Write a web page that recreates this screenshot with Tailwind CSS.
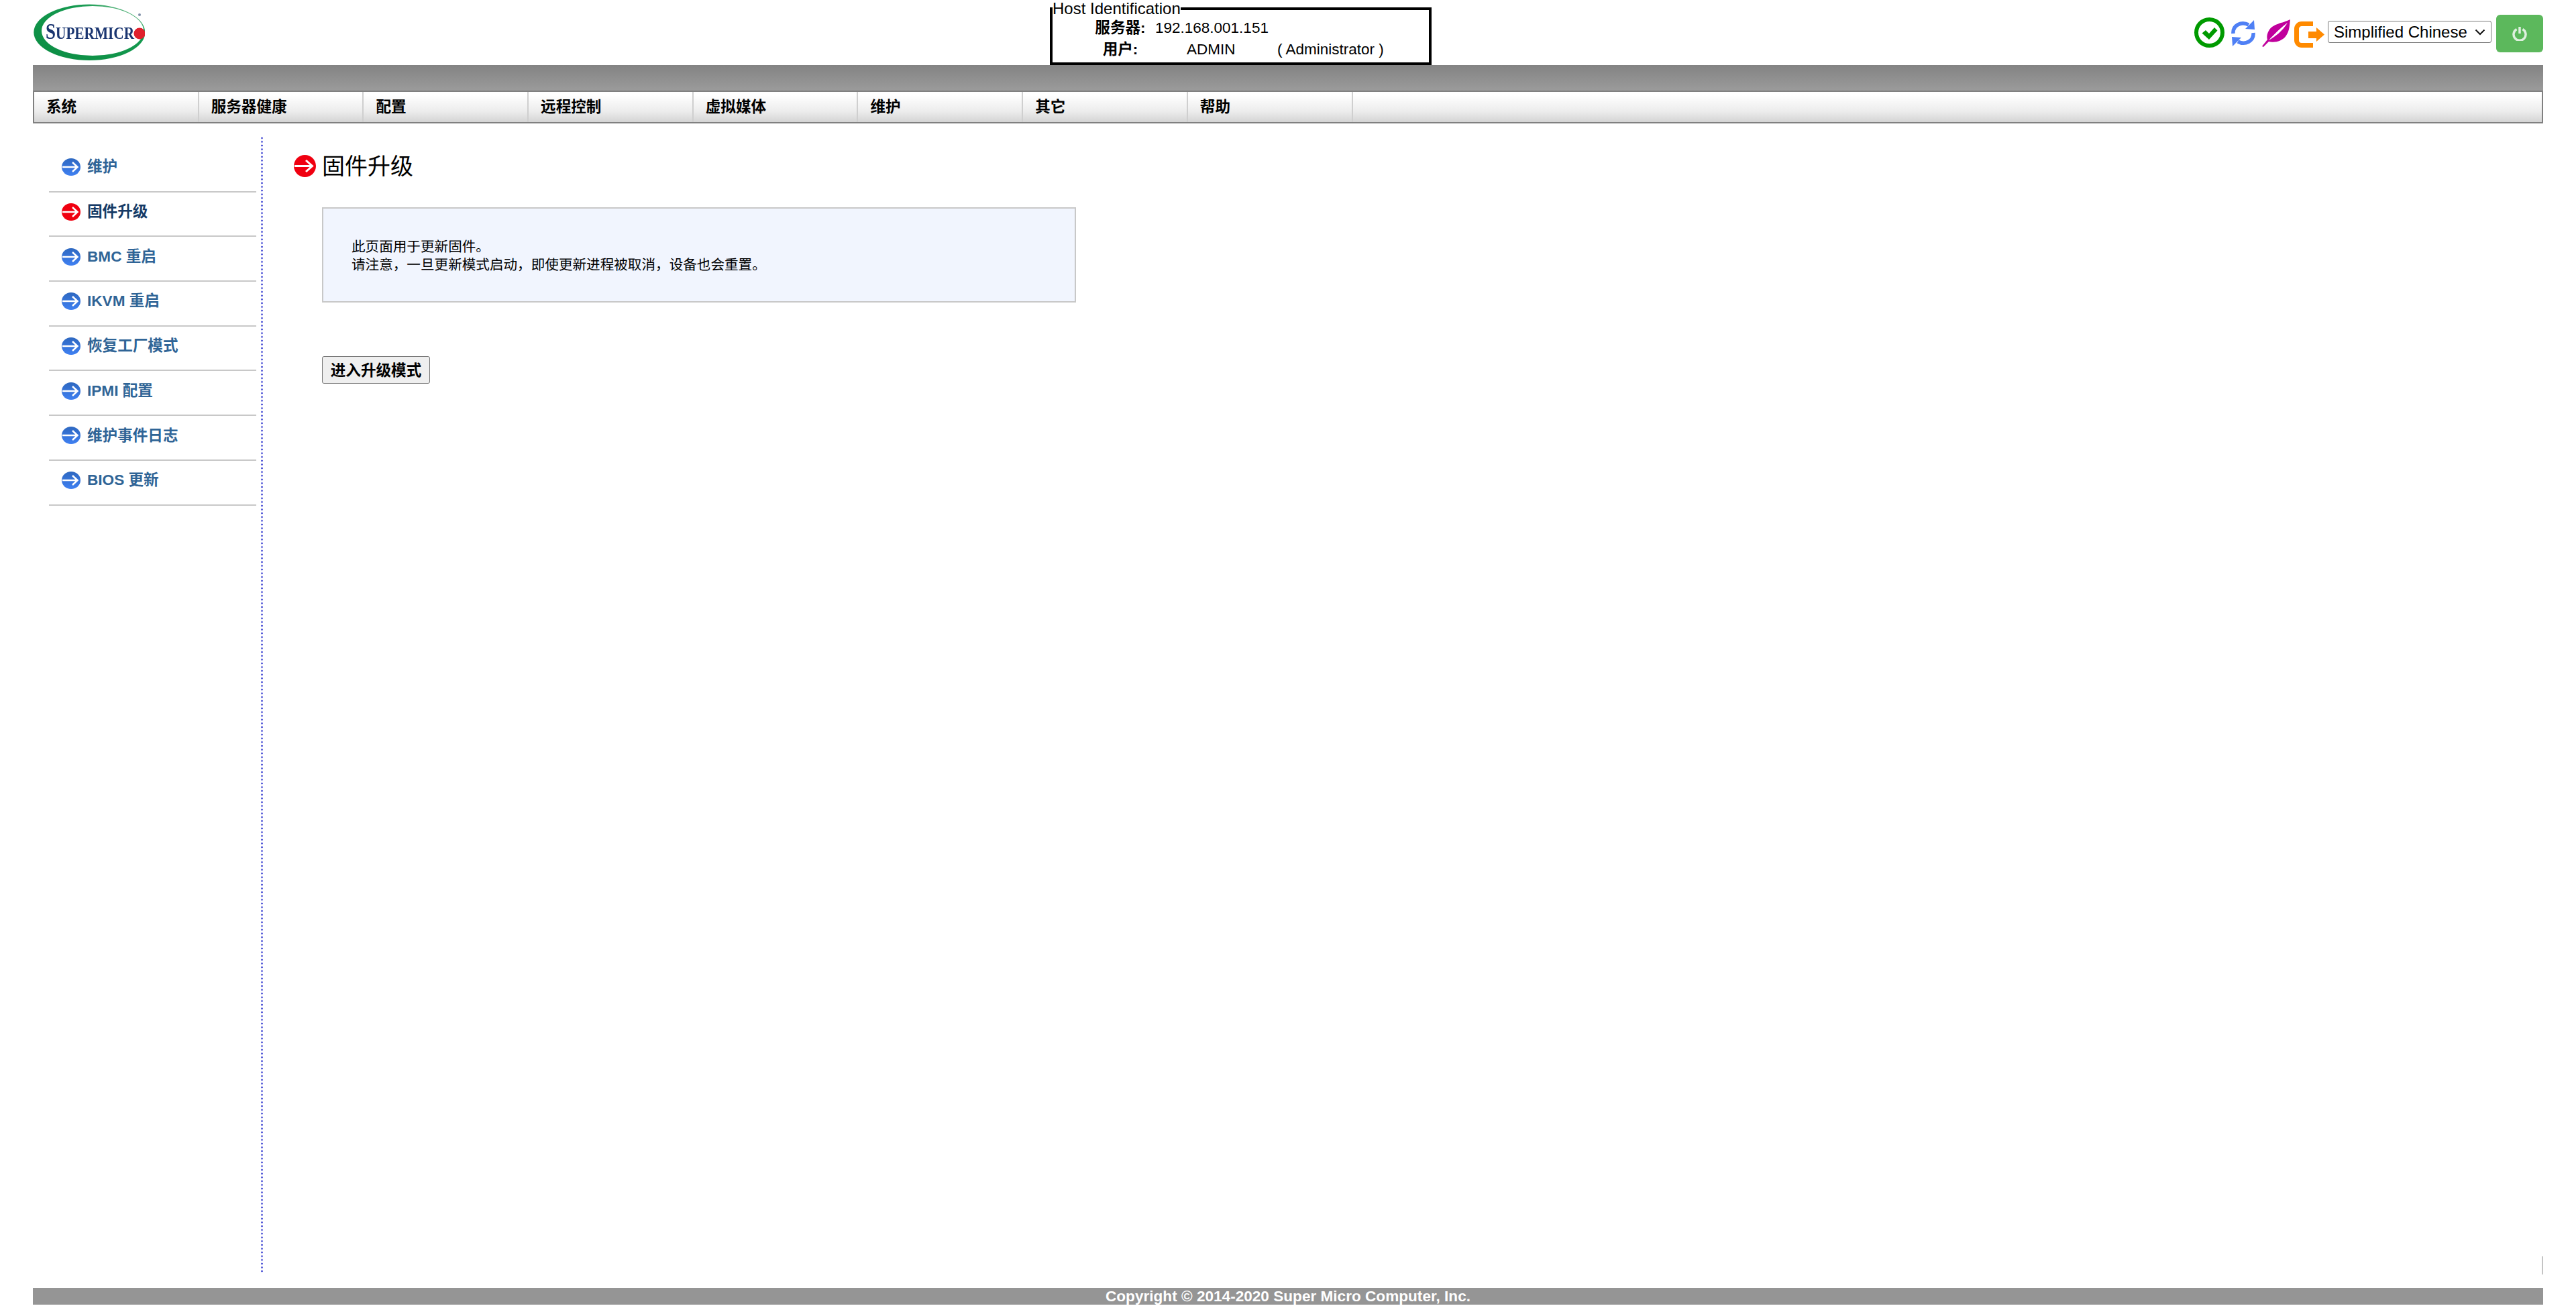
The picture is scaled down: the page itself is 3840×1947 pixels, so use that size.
<!doctype html>
<html lang="zh-CN">
<head>
<meta charset="utf-8">
<title>固件升级</title>
<script src="https://cdn.jsdelivr.net/npm/@tailwindcss/browser@4"></script>
</head>
<body class="bg-white h-[1947px] overflow-hidden text-black text-[22.600px] [font-family:'Liberation_Sans','Noto_Sans_CJK_SC',sans-serif]">
<svg class="absolute w-0 h-0">
  <defs>
    <linearGradient id="b" x1="0" y1="0" x2="0" y2="1"><stop offset="0" stop-color="#2e68c0"/><stop offset="1" stop-color="#3f80f2"/></linearGradient>
    <linearGradient id="g" x1="0" y1="1" x2="1" y2="0"><stop offset="0" stop-color="#0b8c42"/><stop offset="0.7" stop-color="#159a50"/><stop offset="1" stop-color="#8cc8a0"/></linearGradient>
  </defs>
</svg>
<div class="px-[49px]">
  <header class="flex h-[97px] items-start">
    <div class="w-[1516px] pt-[6px]">
      <svg width="167" height="84" viewBox="0 0 167 84" class="block blur-[0.5px]">
        <path fill="url(#g)" fill-rule="evenodd" d="M1.300 42.300a83 41.700 0 1 0 166 0a83 41.700 0 1 0-166 0ZM13 40a76 37 0 1 0 152 0a76 37 0 1 0-152 0Z"/>
        <text x="19" y="52" fill="#1a3570" font-family="Liberation Serif" font-weight="700" textLength="132" lengthAdjust="spacingAndGlyphs"><tspan font-size="33">S</tspan><tspan font-size="26">UPERMICR</tspan></text>
        <circle cx="159" cy="44" r="8.500" fill="#e0202c"/>
        <circle cx="159" cy="16" r="2" fill="#8090a8"/>
      </svg>
    </div>
    <fieldset class="w-[569px] h-[97px] border-4 border-black">
      <legend class="h-[26px] leading-[26px] whitespace-nowrap text-[24px]">Host Identification</legend>
      <div class="flex h-[32px] items-center">
        <b class="ml-[60px] w-[82px] text-center whitespace-nowrap">服务器:</b>
        <span class="ml-[11px] text-[22.500px]">192.168.001.151</span>
      </div>
      <div class="flex h-[32px] items-center">
        <b class="ml-[60px] w-[82px] text-center whitespace-nowrap">用户:</b>
        <span class="ml-[58px] w-[135px] text-[22.500px]">ADMIN</span>
        <span class="text-[22.500px]">( Administrator )</span>
      </div>
    </fieldset>
    <div class="ml-auto flex items-start pt-[22px]">
      <svg width="45" height="45" viewBox="0 0 45 45" class="mt-[4px]">
        <ellipse cx="22.500" cy="22.500" rx="19.500" ry="19.500" fill="none" stroke="#009a00" stroke-width="6"/>
        <path d="M11.500 23.500 17 19l5 5 8-9 4.500 4.500L22 33Z" fill="#009a00"/>
      </svg>
      <svg width="38" height="39" viewBox="0 0 38 39" class="ml-[9px] mt-[8px]">
        <path d="M4 20C3 8 16 1 27 7M34 19c1 12-12 19-23 13" fill="none" stroke="#4f80f5" stroke-width="5.500"/>
        <path d="M35 0 36 14 22 13ZM2 25 16 26 3 39Z" fill="#4f80f5"/>
      </svg>
      <svg width="42" height="42" viewBox="0 0 42 42" class="ml-[9px] mt-[7px]">
        <path d="M42 0C30 6 16 6 10 17 7 22 7 27 8 30L0 40l2 1 8-8c8 2 20 0 26-9C41 17 41 8 42 0Z" fill="#c0009c"/>
        <path d="M38 5C28 12 18 22 10 31 20 25 30 18 38 5Z" fill="#fff"/>
      </svg>
      <svg width="46" height="39" viewBox="0 0 46 39" class="ml-[6px] mt-[10px]">
        <path d="M28 3.500H11a7.500 7.500 0 0 0-7.500 7.500v17a7.500 7.500 0 0 0 7.500 7.500h17" fill="none" stroke="#ff8a00" stroke-width="7"/>
        <path d="M21 15H33V9L45 19.500 33 30V25H21Z" fill="#ff8a00"/>
      </svg>
      <div class="relative ml-[4px] mt-[9px] w-[244px] h-[33px]">
        <select class="appearance-none w-full h-full pl-[8px] bg-white border border-[#767676] rounded-[3px] text-[24px] leading-none">
          <option>Simplified Chinese</option>
        </select>
        <svg width="16" height="10" viewBox="0 0 16 10" class="absolute right-[9px] top-[12px] pointer-events-none"><path d="M1.500 1.500 8 8l6.500-6.500" fill="none" stroke="#111" stroke-width="2"/></svg>
      </div>
      <button class="ml-[7px] w-[70px] h-[56px] bg-[#5cb85c] rounded-[6px] flex items-center justify-center">
        <svg width="22" height="22" viewBox="0 0 22 22">
          <path d="M6.500 4.500a9 9 0 1 0 9 0" fill="none" stroke="#dff0df" stroke-width="3.500"/>
          <path d="M11 1v10" stroke="#dff0df" stroke-width="3.500"/>
        </svg>
      </button>
    </div>
  </header>

  <div class="h-[38px] bg-gradient-to-b from-[#838383] to-[#9b9b9b]"></div>
  <nav class="flex h-[49px] border-x-2 border-y-2 border-[#808080] bg-gradient-to-b from-white from-10% via-[#ececec] via-65% to-[#d4d4d4] font-bold">
    <a class="w-[245.700px] shrink-0 pl-[18px] flex items-center border-r-2 border-[#cfcfcf]">系统</a>
    <a class="w-[245.700px] shrink-0 pl-[18px] flex items-center border-r-2 border-[#cfcfcf]">服务器健康</a>
    <a class="w-[245.700px] shrink-0 pl-[18px] flex items-center border-r-2 border-[#cfcfcf]">配置</a>
    <a class="w-[245.700px] shrink-0 pl-[18px] flex items-center border-r-2 border-[#cfcfcf]">远程控制</a>
    <a class="w-[245.700px] shrink-0 pl-[18px] flex items-center border-r-2 border-[#cfcfcf]">虚拟媒体</a>
    <a class="w-[245.700px] shrink-0 pl-[18px] flex items-center border-r-2 border-[#cfcfcf]">维护</a>
    <a class="w-[245.700px] shrink-0 pl-[18px] flex items-center border-r-2 border-[#cfcfcf]">其它</a>
    <a class="w-[245.700px] shrink-0 pl-[18px] flex items-center border-r-2 border-[#cfcfcf]">帮助</a>
  </nav>

  <div class="relative flex h-[1695px] mt-[19px]">
    <aside class="w-[333px] shrink-0 pl-[24px] pt-[17px] font-bold text-[#2f6496]">
      <a class="flex items-center h-[66.700px] pb-[6px] pl-[19px] gap-[10px] border-b-2 border-[#c8c8c8]"><svg width="28" height="26" viewBox="0 0 28 26" class="blur-[0.4px]"><ellipse cx="14" cy="13" rx="14" ry="13" fill="url(#b)"/><path d="M1 13H23M16 6l7.500 7-7.500 7" fill="none" stroke="#fff" stroke-width="2.500"/></svg>维护</a>
      <a class="flex items-center h-[66.700px] pb-[6px] pl-[19px] gap-[10px] border-b-2 border-[#c8c8c8] text-[#153a66]"><svg width="28" height="26" viewBox="0 0 28 26" class="blur-[0.4px]"><ellipse cx="14" cy="13" rx="14" ry="13" fill="#f00010"/><path d="M1 13H23M16 6l7.500 7-7.500 7" fill="none" stroke="#fff" stroke-width="2.500"/></svg>固件升级</a>
      <a class="flex items-center h-[66.700px] pb-[6px] pl-[19px] gap-[10px] border-b-2 border-[#c8c8c8]"><svg width="28" height="26" viewBox="0 0 28 26" class="blur-[0.4px]"><ellipse cx="14" cy="13" rx="14" ry="13" fill="url(#b)"/><path d="M1 13H23M16 6l7.500 7-7.500 7" fill="none" stroke="#fff" stroke-width="2.500"/></svg>BMC 重启</a>
      <a class="flex items-center h-[66.700px] pb-[6px] pl-[19px] gap-[10px] border-b-2 border-[#c8c8c8]"><svg width="28" height="26" viewBox="0 0 28 26" class="blur-[0.4px]"><ellipse cx="14" cy="13" rx="14" ry="13" fill="url(#b)"/><path d="M1 13H23M16 6l7.500 7-7.500 7" fill="none" stroke="#fff" stroke-width="2.500"/></svg>IKVM 重启</a>
      <a class="flex items-center h-[66.700px] pb-[6px] pl-[19px] gap-[10px] border-b-2 border-[#c8c8c8]"><svg width="28" height="26" viewBox="0 0 28 26" class="blur-[0.4px]"><ellipse cx="14" cy="13" rx="14" ry="13" fill="url(#b)"/><path d="M1 13H23M16 6l7.500 7-7.500 7" fill="none" stroke="#fff" stroke-width="2.500"/></svg>恢复工厂模式</a>
      <a class="flex items-center h-[66.700px] pb-[6px] pl-[19px] gap-[10px] border-b-2 border-[#c8c8c8]"><svg width="28" height="26" viewBox="0 0 28 26" class="blur-[0.4px]"><ellipse cx="14" cy="13" rx="14" ry="13" fill="url(#b)"/><path d="M1 13H23M16 6l7.500 7-7.500 7" fill="none" stroke="#fff" stroke-width="2.500"/></svg>IPMI 配置</a>
      <a class="flex items-center h-[66.700px] pb-[6px] pl-[19px] gap-[10px] border-b-2 border-[#c8c8c8]"><svg width="28" height="26" viewBox="0 0 28 26" class="blur-[0.4px]"><ellipse cx="14" cy="13" rx="14" ry="13" fill="url(#b)"/><path d="M1 13H23M16 6l7.500 7-7.500 7" fill="none" stroke="#fff" stroke-width="2.500"/></svg>维护事件日志</a>
      <a class="flex items-center h-[66.700px] pb-[6px] pl-[19px] gap-[10px] border-b-2 border-[#c8c8c8]"><svg width="28" height="26" viewBox="0 0 28 26" class="blur-[0.4px]"><ellipse cx="14" cy="13" rx="14" ry="13" fill="url(#b)"/><path d="M1 13H23M16 6l7.500 7-7.500 7" fill="none" stroke="#fff" stroke-width="2.500"/></svg>BIOS 更新</a>
    </aside>
    <div class="ml-[7px] w-[3px] shrink-0 bg-[radial-gradient(circle,#5a60d8_1.300px,transparent_1.700px)] bg-[length:3px_5.600px]"></div>
    <main class="flex-1 pl-[46px] pt-[24px]">
      <h1 class="flex items-center h-[40px] gap-[9px] text-[34px] font-normal">
        <svg width="33" height="33" viewBox="0 0 33 33" class="blur-[0.4px]"><circle cx="16.500" cy="16.500" r="16.500" fill="#f00010"/><path d="M1 16.500H27M18 8l9.500 8.500L18 25" fill="none" stroke="#fff" stroke-width="3"/></svg>
        <span class="pt-[3px]">固件升级</span>
      </h1>
      <section class="ml-[42px] mt-[42px] w-[1124px] h-[142px] px-[42px] pt-[2px] flex flex-col justify-center bg-[#f1f5fe] border-2 border-[#c8c8c8] text-[20.600px] leading-[27px]">
        <p>此页面用于更新固件。</p>
        <p>请注意，一旦更新模式启动，即使更新进程被取消，设备也会重置。</p>
      </section>
      <button class="block ml-[42px] mt-[80px] w-[161px] h-[41px] pt-[2px] bg-[#efefef] border border-[#767676] rounded-[3px] font-bold text-[22.600px] whitespace-nowrap">进入升级模式</button>
    </main>
    <div class="absolute right-0 top-[1670px] w-[2px] h-[27px] bg-[#c4c4c4]"></div>
  </div>

  <footer class="mt-[22px] h-[25px] bg-[#959595] text-white font-bold text-center leading-[25px]">Copyright © 2014-2020 Super Micro Computer, Inc.</footer>
</div>
</body>
</html>
